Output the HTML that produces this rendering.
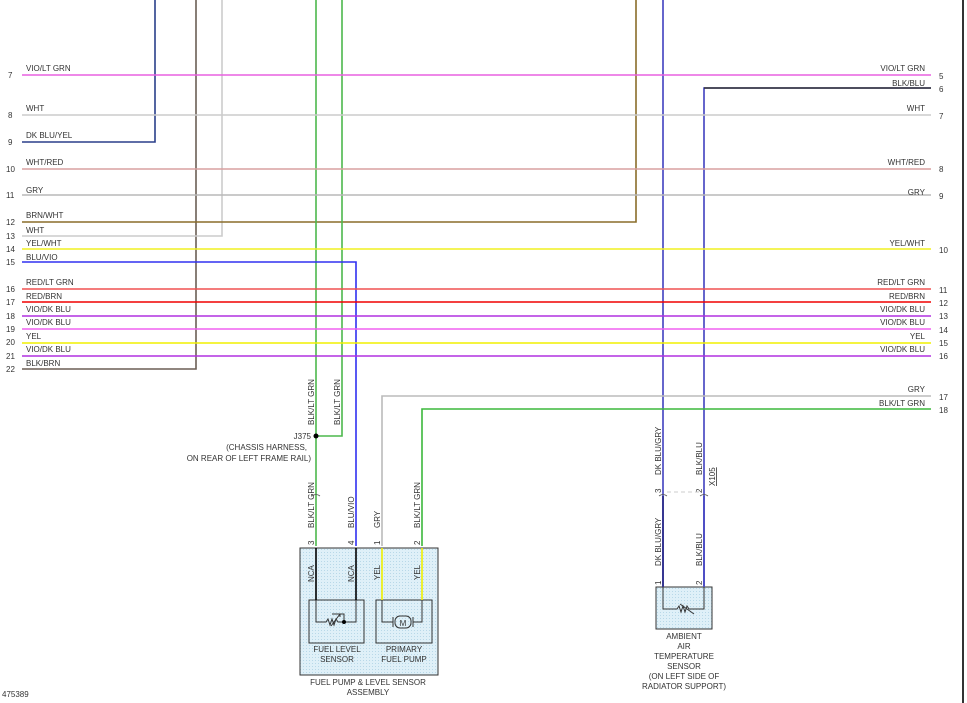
<!DOCTYPE html>
<html><head><meta charset="utf-8"><style>
html,body{margin:0;padding:0;background:#fff;}
svg{display:block;}
text{font-family:"Liberation Sans",Arial,sans-serif;font-size:8px;fill:#333;}
</style></head><body>
<svg width="967" height="703" viewBox="0 0 967 703" xmlns="http://www.w3.org/2000/svg">
<defs>
<pattern id="dots" width="3" height="3" patternUnits="userSpaceOnUse"><rect width="3" height="3" fill="#dff0f8"/><rect width="1" height="1" fill="#b8d8e8"/></pattern>
</defs>
<rect x="962" y="0" width="2" height="703" fill="#333"/>
<g fill="none" stroke-width="1.6">
<!-- verticals -->
<polyline points="155,0 155,142 22,142" stroke="#2a3f8a"/>
<polyline points="196,0 196,369 22,369" stroke="#6b5f55"/>
<polyline points="222,0 222,236 22,236" stroke="#ccc"/>
<polyline points="636,0 636,222 22,222" stroke="#8a6d2a"/>
<line x1="316" y1="0" x2="316" y2="546" stroke="#4cb84c"/>
<polyline points="342,0 342,436 316,436" stroke="#4cb84c"/>
<polyline points="22,262 356,262 356,546" stroke="#3030f0"/>
<line x1="663" y1="0" x2="663" y2="586" stroke="#4040c0"/>
<polyline points="931,88 704,88 704,586" stroke="#4040c0"/>
<line x1="704" y1="88" x2="931" y2="88" stroke="#333"/>
<polyline points="931,396 382,396 382,546" stroke="#bbb"/>
<polyline points="931,409 422,409 422,546" stroke="#3cb83c"/>
<!-- horizontals -->
<line x1="22" y1="75" x2="931" y2="75" stroke="#e860e0"/>
<line x1="22" y1="115" x2="931" y2="115" stroke="#ccc"/>
<line x1="22" y1="169" x2="931" y2="169" stroke="#d8a0a0"/>
<line x1="22" y1="195" x2="931" y2="195" stroke="#b8b8b8"/>
<line x1="22" y1="249" x2="931" y2="249" stroke="#f0f020"/>
<line x1="22" y1="289" x2="931" y2="289" stroke="#f05050"/>
<line x1="22" y1="302" x2="931" y2="302" stroke="#f00000"/>
<line x1="22" y1="316" x2="931" y2="316" stroke="#b030e0"/>
<line x1="22" y1="329" x2="931" y2="329" stroke="#f060f0"/>
<line x1="22" y1="343" x2="931" y2="343" stroke="#f0f000"/>
<line x1="22" y1="356" x2="931" y2="356" stroke="#b030e0"/>
</g>
<g>
<text x="8" y="78">7</text><text x="8" y="118">8</text><text x="8" y="145">9</text><text x="6" y="172">10</text><text x="6" y="198">11</text><text x="6" y="225">12</text><text x="6" y="239">13</text><text x="6" y="252">14</text><text x="6" y="265">15</text><text x="6" y="292">16</text><text x="6" y="305">17</text><text x="6" y="319">18</text><text x="6" y="332">19</text><text x="6" y="345">20</text><text x="6" y="359">21</text><text x="6" y="372">22</text>
<text x="26" y="71">VIO/LT GRN</text><text x="26" y="111">WHT</text><text x="26" y="138">DK BLU/YEL</text><text x="26" y="165">WHT/RED</text><text x="26" y="193">GRY</text><text x="26" y="218">BRN/WHT</text><text x="26" y="233">WHT</text><text x="26" y="246">YEL/WHT</text><text x="26" y="260">BLU/VIO</text><text x="26" y="285">RED/LT GRN</text><text x="26" y="299">RED/BRN</text><text x="26" y="312">VIO/DK BLU</text><text x="26" y="325">VIO/DK BLU</text><text x="26" y="339">YEL</text><text x="26" y="352">VIO/DK BLU</text><text x="26" y="366">BLK/BRN</text>
</g>
<g text-anchor="end">
<text x="925" y="71">VIO/LT GRN</text><text x="925" y="86">BLK/BLU</text><text x="925" y="111">WHT</text><text x="925" y="165">WHT/RED</text><text x="925" y="195">GRY</text><text x="925" y="246">YEL/WHT</text><text x="925" y="285">RED/LT GRN</text><text x="925" y="299">RED/BRN</text><text x="925" y="312">VIO/DK BLU</text><text x="925" y="325">VIO/DK BLU</text><text x="925" y="339">YEL</text><text x="925" y="352">VIO/DK BLU</text><text x="925" y="392">GRY</text><text x="925" y="406">BLK/LT GRN</text>
</g>
<g>
<text x="939" y="79">5</text><text x="939" y="92">6</text><text x="939" y="119">7</text><text x="939" y="172">8</text><text x="939" y="199">9</text><text x="939" y="253">10</text><text x="939" y="293">11</text><text x="939" y="306">12</text><text x="939" y="319">13</text><text x="939" y="333">14</text><text x="939" y="346">15</text><text x="939" y="359">16</text><text x="939" y="400">17</text><text x="939" y="413">18</text>
</g>
<!-- vertical labels -->
<g>
<text transform="translate(314,425) rotate(-90)">BLK/LT GRN</text>
<text transform="translate(340,425) rotate(-90)">BLK/LT GRN</text>
<text transform="translate(314,528) rotate(-90)">BLK/LT GRN</text>
<text transform="translate(354,528) rotate(-90)">BLU/VIO</text>
<text transform="translate(380,528) rotate(-90)">GRY</text>
<text transform="translate(420,528) rotate(-90)">BLK/LT GRN</text>
<text transform="translate(314,545) rotate(-90)">3</text><text transform="translate(354,545) rotate(-90)">4</text><text transform="translate(380,545) rotate(-90)">1</text><text transform="translate(420,545) rotate(-90)">2</text>
<text transform="translate(661,475) rotate(-90)">DK BLU/GRY</text>
<text transform="translate(702,475) rotate(-90)">BLK/BLU</text>
<text transform="translate(661,493) rotate(-90)">3</text><text transform="translate(702,493) rotate(-90)">2</text>
<text transform="translate(715,486) rotate(-90)" text-decoration="underline">X105</text>
<text transform="translate(661,566) rotate(-90)">DK BLU/GRY</text>
<text transform="translate(702,566) rotate(-90)">BLK/BLU</text>
<text transform="translate(661,585) rotate(-90)">1</text><text transform="translate(702,585) rotate(-90)">2</text>
</g>
<circle cx="316" cy="436" r="2.5" fill="#000"/>
<text x="311" y="439" text-anchor="end">J375</text>
<text x="307" y="450" text-anchor="end">(CHASSIS HARNESS,</text>
<text x="311" y="461" text-anchor="end">ON REAR OF LEFT FRAME RAIL)</text>
<line x1="667" y1="492" x2="700" y2="492" stroke="#ccc" stroke-dasharray="4,3"/>
<g fill="none" stroke="#555" stroke-width="0.8">
<path d="M312,496 q4,-3 8,0 M659,496 q4,-3 8,0 M700,496 q4,-3 8,0"/>
</g>
<!-- fuel box -->
<rect x="300" y="548" width="138" height="127" fill="url(#dots)" stroke="#333"/>
<rect x="309" y="600" width="55" height="43" fill="none" stroke="#333"/>
<rect x="376" y="600" width="56" height="43" fill="none" stroke="#333"/>
<g fill="none" stroke-width="1.6">
<line x1="316" y1="548" x2="316" y2="600" stroke="#000"/>
<line x1="356" y1="548" x2="356" y2="600" stroke="#000"/>
<line x1="382" y1="548" x2="382" y2="600" stroke="#f0f000"/>
<line x1="422" y1="548" x2="422" y2="600" stroke="#f0f000"/>
</g>
<g fill="none" stroke="#333" stroke-width="1">
<path d="M316,600 V622 H326 l2,-3 2,6 2,-6 2,6 2,-6 2,3 H356 V600"/>
<path d="M331,626 L340,614 M337,614 h3 v3 M332,614 h12 v8"/>
<path d="M382,600 V622 H393 M413,622 H422 V600"/>
<rect x="395" y="616" width="16" height="12" rx="5"/>
<path d="M393,617 v10 M413,617 v10"/>
</g>
<circle cx="344" cy="622" r="2" fill="#000"/>
<text x="403" y="626" text-anchor="middle" font-size="9">M</text>
<g font-size="8">
<text transform="translate(314,582) rotate(-90)">NCA</text><text transform="translate(354,582) rotate(-90)">NCA</text>
<text transform="translate(380,580) rotate(-90)">YEL</text><text transform="translate(420,580) rotate(-90)">YEL</text>
</g>
<g text-anchor="middle">
<text x="337" y="652">FUEL LEVEL</text><text x="337" y="662">SENSOR</text>
<text x="404" y="652">PRIMARY</text><text x="404" y="662">FUEL PUMP</text>
<text x="368" y="685">FUEL PUMP &amp; LEVEL SENSOR</text><text x="368" y="695">ASSEMBLY</text>
</g>
<!-- ambient -->
<rect x="656" y="587" width="56" height="42" fill="url(#dots)" stroke="#333"/>
<g fill="none" stroke-width="1.6">
<line x1="663" y1="496" x2="663" y2="587" stroke="#202080"/>
<line x1="704" y1="496" x2="704" y2="587" stroke="#4040c0"/>
</g>
<g fill="none" stroke="#333" stroke-width="1">
<path d="M663,587 V609 H677 l2,-3 2,6 2,-6 2,6 2,-6 2,3 H704 V587"/>
<path d="M680,604 L694,614"/>
</g>
<g text-anchor="middle">
<text x="684" y="639">AMBIENT</text><text x="684" y="649">AIR</text><text x="684" y="659">TEMPERATURE</text><text x="684" y="669">SENSOR</text><text x="684" y="679">(ON LEFT SIDE OF</text><text x="684" y="689">RADIATOR SUPPORT)</text>
</g>
<text x="2" y="697">475389</text>
</svg>
</body></html>
